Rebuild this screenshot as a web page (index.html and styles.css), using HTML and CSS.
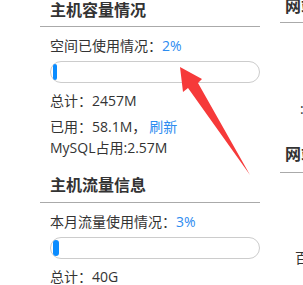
FILE: index.html
```html
<!DOCTYPE html>
<html lang="zh-CN">
<head>
  <meta charset="UTF-8" />
  <meta name="viewport" content="width=device-width, initial-scale=1.0"/>
  <title>主机信息</title>
  <link rel="stylesheet" href="styles.css">
</head>
<body>
  <div class="page">
    <!-- 左侧：主机信息 -->
    <div class="box box-host">
      <h3 class="box-title">主机容量情况</h3>
      <div class="box-body">
        <p class="line">空间已使用情况：<span class="num">2%</span></p>
        <div class="bar"><div class="bar-fill" style="width:2%"></div></div>
        <p class="line total">总计：2457M</p>
        <p class="line used">已用：58.1M，<a href="#" class="link">刷新</a><br>MySQL占用:2.57M</p>
      </div>

      <h3 class="box-title second">主机流量信息</h3>
      <div class="box-body">
        <p class="line">本月流量使用情况：<span class="num">3%</span></p>
        <div class="bar"><div class="bar-fill" style="width:3%"></div></div>
        <p class="line total">总计：40G</p>
      </div>
    </div>

    <!-- 右侧：网站信息 -->
    <div class="box box-site">
      <h3 class="box-title">网站基本信息</h3>
      <div class="site-body first">
        <p class="line site-row colon">:</p>
      </div>
      <h3 class="box-title second">网站访问统计</h3>
      <div class="site-body last">
        <p class="line site-row">百度收录</p>
      </div>
    </div>
  </div>

  <svg class="arrow" width="303" height="285" viewBox="0 0 303 285">
    <polygon points="180,67 202,79 198,83 250,175 188,88 183,92" fill="#f63a3a"/>
  </svg>
</body>
</html>
```

FILE: styles.css
```css
* {
  box-sizing: border-box;
}

html, body {
  margin: 0;
  width: 303px;
  height: 285px;
  overflow: hidden;
}

body {
  font-family: 'Open Sans', 'Noto Sans CJK SC', sans-serif;
  color: #333;
  background: #fff;
  position: relative;
}

.page {
  display: flex;
  align-items: flex-start;
  gap: 20px;
  padding-left: 40px;
}

.box-host {
  width: 220px;
  flex-shrink: 0;
}

.box-site {
  width: 200px;
  flex-shrink: 0;
  margin-top: -4px;
}

.box-title {
  margin: 0;
  font-size: 16px;
  font-weight: bold;
  line-height: 20px;
  padding: 0 0 6px 10px;
  border-bottom: 1px solid #aaa;
  white-space: nowrap;
}

.box-title.second {
  margin-top: 17px;
  padding-bottom: 7px;
}

.box-site .box-title {
  padding-left: 5px;
}

.box-site .box-title.second {
  margin-top: 25px;
  padding-bottom: 8px;
}

.box-body {
  padding: 8px 0 0 10px;
}

.line {
  margin: 0;
  font-size: 14px;
  line-height: 21px;
  white-space: nowrap;
}

.num, .link {
  color: #2d8cf0;
  text-decoration: none;
}

.link {
  margin-left: 3px;
}

.bar {
  margin-top: 5px;
  height: 22px;
  border: 1px solid #ccc;
  border-radius: 11px;
  padding: 2px;
  background: #fff;
}

.bar-fill {
  height: 100%;
  min-width: 4px;
  background: #0a8cff;
  border-radius: 3px;
}

.total {
  margin-top: 7px;
}

.used {
  margin-top: 5px;
}

.site-body.first {
  padding-top: 75px;
}

.site-body.last {
  padding-top: 74px;
}

.site-row {
  padding-left: 15px;
}

.site-row.colon {
  padding-left: 20px;
}

.arrow {
  position: absolute;
  top: 0;
  left: 0;
  pointer-events: none;
}
```
